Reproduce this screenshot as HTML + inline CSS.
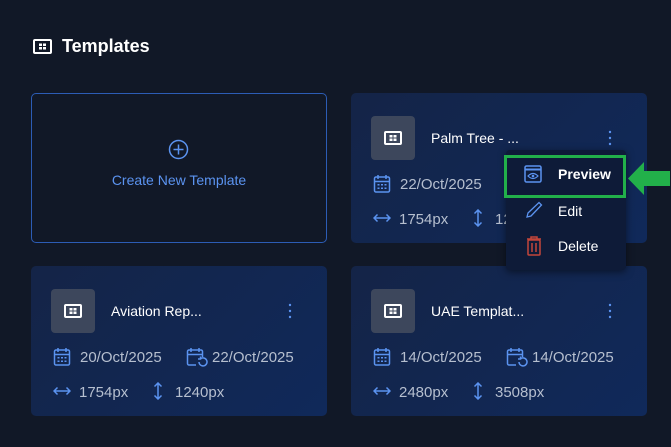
<!DOCTYPE html>
<html><head><style>
body{margin:0;width:671px;height:447px;background:#111827;font-family:"Liberation Sans",sans-serif;position:relative;overflow:hidden;color:#fff}
.a{position:absolute}
.card{position:absolute;width:296px;height:150px;border-radius:5px;background:linear-gradient(135deg,#142447,#10295a)}
.ib{position:absolute;left:20px;top:23px;width:44px;height:44px;border-radius:4px;background:#3d475c}
.t{position:absolute;left:80px;top:35px;font-size:15px;color:#fff}
.dots{position:absolute;left:257px;top:37px;width:3px;height:16px}
.mt{font-size:15px;color:#b6bfcf;position:absolute}
svg{position:absolute}
</style></head><body>
<svg style="left:33px;top:39px" width="20" height="15" viewBox="0 0 20 15"><rect x="1" y="1" width="17" height="13" rx="1" fill="none" stroke="#fff" stroke-width="2"/><rect x="6" y="4.5" width="3" height="2.5" fill="#fff"/><rect x="10" y="4.5" width="3" height="2.5" fill="#fff"/><rect x="6" y="8" width="3" height="2.5" fill="#fff"/><rect x="10" y="8" width="3" height="2.5" fill="#fff"/></svg>
<div class="a" style="left:62px;top:36px;font-size:18px;font-weight:bold">Templates</div>

<div class="a" style="left:31px;top:93px;width:294px;height:148px;border:1px solid #2c5cb5;border-radius:5px"></div>
<svg style="left:168px;top:139px" width="21" height="21" viewBox="0 0 21 21"><circle cx="10.5" cy="10.5" r="9" fill="none" stroke="#5b93f0" stroke-width="1.5"/><path d="M10.5 5.5v10M5.5 10.5h10" stroke="#5b93f0" stroke-width="1.5"/></svg>
<div class="a" style="left:31px;top:172px;width:296px;text-align:center;font-size:14px;color:#5b93f0">Create New Template</div>

<!-- cards -->
<div class="card" style="left:351px;top:93px" id="c1"></div>
<div class="card" style="left:31px;top:266px"></div>
<div class="card" style="left:351px;top:266px"></div>

<script>
function card(x,y,title,d1,d2,w,h){
 var s='';
 s+='<div class="ib" style="left:'+(x+20)+'px;top:'+(y+23)+'px"></div>';
 s+='<svg style="left:'+(x+33)+'px;top:'+(y+38)+'px" width="18" height="14" viewBox="0 0 18 14"><rect x="1" y="1" width="16" height="12" rx="1" fill="none" stroke="#fff" stroke-width="2"/><rect x="5.5" y="4" width="3" height="2.5" fill="#fff"/><rect x="9.5" y="4" width="3" height="2.5" fill="#fff"/><rect x="5.5" y="7.5" width="3" height="2.5" fill="#fff"/><rect x="9.5" y="7.5" width="3" height="2.5" fill="#fff"/></svg>';
 s+='<div class="a" style="left:'+(x+80)+'px;top:'+(y+37)+'px;font-size:14px">'+title+'</div>';
 s+='<svg style="left:'+(x+257)+'px;top:'+(y+37)+'px" width="4" height="16"><circle cx="2" cy="2" r="1.2" fill="#5b93f0"/><circle cx="2" cy="8" r="1.2" fill="#5b93f0"/><circle cx="2" cy="14" r="1.2" fill="#5b93f0"/></svg>';
 var cal='<rect x="1.5" y="3" width="15" height="15" rx="1.5" fill="none" stroke="#5b93f0" stroke-width="1.5"/><path d="M1.5 7.5h15M5 1v4M13 1v4" stroke="#5b93f0" stroke-width="1.5"/>';
 s+='<svg style="left:'+(x+22)+'px;top:'+(y+81)+'px" width="18" height="19" viewBox="0 0 18 19">'+cal+'<g fill="#5b93f0"><rect x="4.5" y="10" width="2" height="1.5"/><rect x="8" y="10" width="2" height="1.5"/><rect x="11.5" y="10" width="2" height="1.5"/><rect x="4.5" y="13.5" width="2" height="1.5"/><rect x="8" y="13.5" width="2" height="1.5"/><rect x="11.5" y="13.5" width="2" height="1.5"/></g></svg>';
 s+='<div class="mt" style="left:'+(x+49)+'px;top:'+(y+83)+'px">'+d1+'</div>';
 if(d2){
 s+='<svg style="left:'+(x+155)+'px;top:'+(y+81)+'px" width="22" height="22" viewBox="0 0 22 22"><path d="M10 18H3a1.5 1.5 0 0 1-1.5-1.5v-12A1.5 1.5 0 0 1 3 3h12a1.5 1.5 0 0 1 1.5 1.5V10M1.5 7.5h15M5 1v4M13 1v4" fill="none" stroke="#5b93f0" stroke-width="1.5"/><path d="M13 15a4 4 0 1 0 1.5-3.2M14.5 9.5v2.5h-2.5" fill="none" stroke="#5b93f0" stroke-width="1.5"/></svg>';
 s+='<div class="mt" style="left:'+(x+181)+'px;top:'+(y+83)+'px">'+d2+'</div>';
 }
 s+='<svg style="left:'+(x+22)+'px;top:'+(y+120)+'px" width="18" height="10" viewBox="0 0 18 10"><path d="M1 5h16M4.5 1.5L1 5l3.5 3.5M13.5 1.5L17 5l-3.5 3.5" fill="none" stroke="#5b93f0" stroke-width="1.5"/></svg>';
 s+='<div class="mt" style="left:'+(x+48)+'px;top:'+(y+118)+'px">'+w+'</div>';
 s+='<svg style="left:'+(x+122)+'px;top:'+(y+116)+'px" width="10" height="18" viewBox="0 0 10 18"><path d="M5 1v16M1.5 4.5L5 1l3.5 3.5M1.5 13.5L5 17l3.5-3.5" fill="none" stroke="#5b93f0" stroke-width="1.5"/></svg>';
 s+='<div class="mt" style="left:'+(x+144)+'px;top:'+(y+118)+'px">'+h+'</div>';
 document.write(s);
}
card(351,93,'Palm Tree - ...','22/Oct/2025','','1754px','1240px');
card(31,266,'Aviation Rep...','20/Oct/2025','22/Oct/2025','1754px','1240px');
card(351,266,'UAE Templat...','14/Oct/2025','14/Oct/2025','2480px','3508px');
</script>

<!-- menu -->
<div class="a" style="left:506px;top:150px;width:120px;height:120px;background:#0e1b38;border-radius:4px;box-shadow:0 2px 8px rgba(0,0,0,.5)"></div>
<div class="a" style="left:504px;top:155px;width:116px;height:37px;border:3px solid #22b04a"></div>
<svg style="left:524px;top:165px" width="18" height="18" viewBox="0 0 18 18"><rect x="1" y="1" width="16" height="16" rx="1.5" fill="none" stroke="#5b93f0" stroke-width="1.5"/><path d="M1 4.5h16" stroke="#5b93f0" stroke-width="2"/><path d="M4 11q5-5 10 0q-5 5-10 0z" fill="none" stroke="#5b93f0" stroke-width="1.2"/><circle cx="9" cy="11" r="1.3" fill="#5b93f0"/></svg>
<div class="a" style="left:558px;top:166px;font-size:14px;font-weight:bold">Preview</div>
<svg style="left:525px;top:201px" width="18" height="18" viewBox="0 0 18 18"><path d="M2 16l1-4L14 1.5l2.5 2.5L6 15z" fill="none" stroke="#5b93f0" stroke-width="1.3"/></svg>
<div class="a" style="left:558px;top:203px;font-size:14px">Edit</div>
<svg style="left:526px;top:236px" width="16" height="20" viewBox="0 0 16 20"><path d="M1 3h14M5 3V1h6v2" stroke="#c4463a" stroke-width="1.5" fill="none"/><rect x="2" y="4" width="12" height="15" rx="1" fill="none" stroke="#c4463a" stroke-width="1.5"/><path d="M6 7v9M10 7v9" stroke="#c4463a" stroke-width="1.5"/></svg>
<div class="a" style="left:558px;top:238px;font-size:14px">Delete</div>
<svg style="left:627px;top:160px" width="44" height="37" viewBox="0 0 44 37"><path d="M1 18.5L17 2v9h26v15H17v9z" fill="#22b04a"/></svg>
</body></html>
